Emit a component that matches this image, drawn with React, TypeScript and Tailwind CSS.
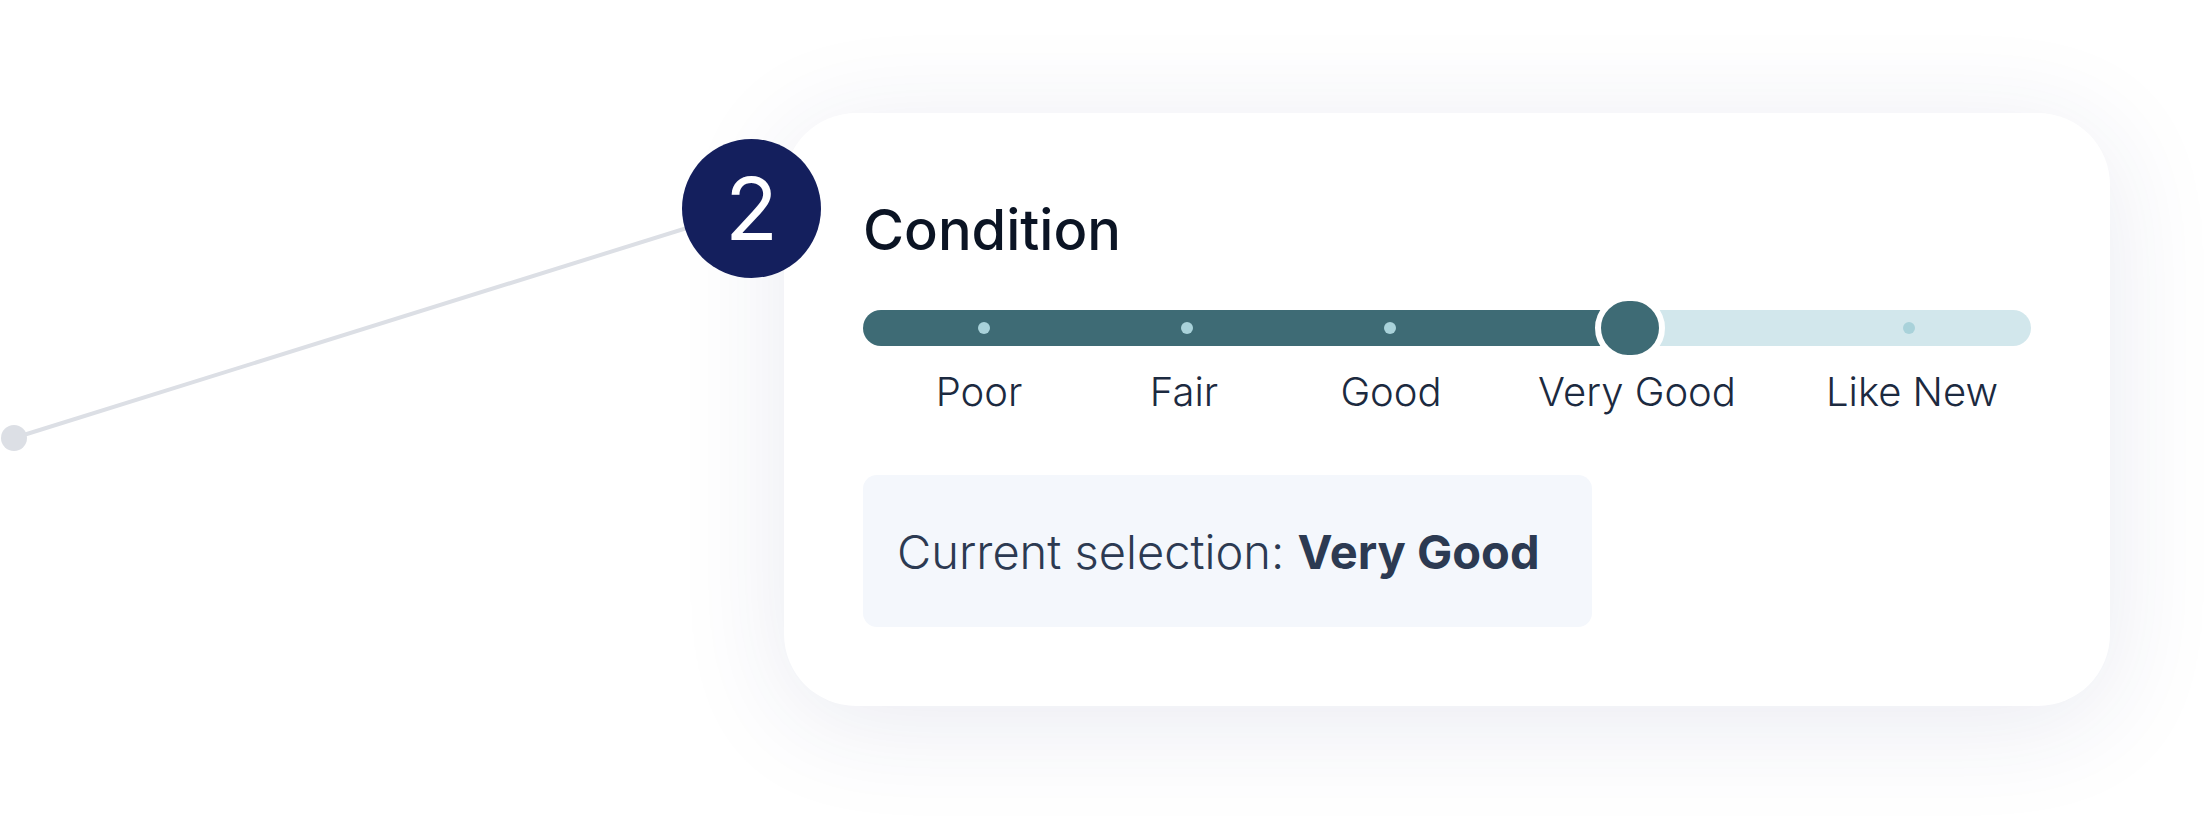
import React from "react";

const dots = [121, 324, 527, 1046];
const labels = ["Poor", "Fair", "Good", "Very Good", "Like New"];

export default function App() {
  return (
    <div
      className="relative w-full h-[819px] bg-white overflow-hidden"
      style={{ fontFamily: "Inter, 'Noto Sans', sans-serif" }}
    >
      <svg className="absolute inset-0 pointer-events-none" width="2211" height="819">
        <line x1="14" y1="438" x2="751" y2="208" stroke="#dcdfe5" strokeWidth="4" />
        <circle cx="14" cy="438" r="13" fill="#dcdfe5" />
      </svg>

      <div className="relative ml-[784px] mt-[113px] w-[1326px] rounded-[72px] bg-white px-[79px] pt-[89px] pb-[79px] shadow-[0_16px_110px_rgba(40,52,120,0.10)]">
        <h2 className="text-[56px] leading-none font-medium text-[#0b1424]">Condition</h2>

        <div className="relative mt-[52px] flex h-[36px] w-full">
          <div className="h-full w-[767px] rounded-l-full bg-[#3e6b75]" />
          <div className="h-full flex-1 rounded-r-full bg-[#d2e7ec]" />
          {dots.map((d, i) => (
            <span
              key={i}
              className="absolute top-[12px] h-[12px] w-[12px] -ml-[6px] rounded-full bg-[#a9d2da]"
              style={{ left: d }}
            />
          ))}
          <span className="absolute left-[732px] top-[-15px] h-[66px] w-[70px] rounded-full border-[6px] border-white bg-[#3e6b75]" />
        </div>

        <div className="mt-[26px] grid grid-cols-[232px_178px_236px_256px_294px] text-[40px] leading-none font-light text-[#1c2a40]">
          {labels.map((l) => (
            <span key={l} className="text-center whitespace-nowrap">
              {l}
            </span>
          ))}
        </div>

        <div className="mt-[63px] flex h-[152px] w-[729px] items-center rounded-[14px] bg-[#f4f7fc] pl-[34px]">
          <p className="text-[47px] leading-none font-light text-[#2c3a52] whitespace-nowrap">
            Current selection: <span className="font-bold">Very Good</span>
          </p>
        </div>
      </div>

      <div className="absolute left-[682px] top-[139px] flex h-[139px] w-[139px] items-center justify-center rounded-full bg-[#141f5d]">
        <span className="text-[87px] leading-none font-normal text-white">2</span>
      </div>
    </div>
  );
}
